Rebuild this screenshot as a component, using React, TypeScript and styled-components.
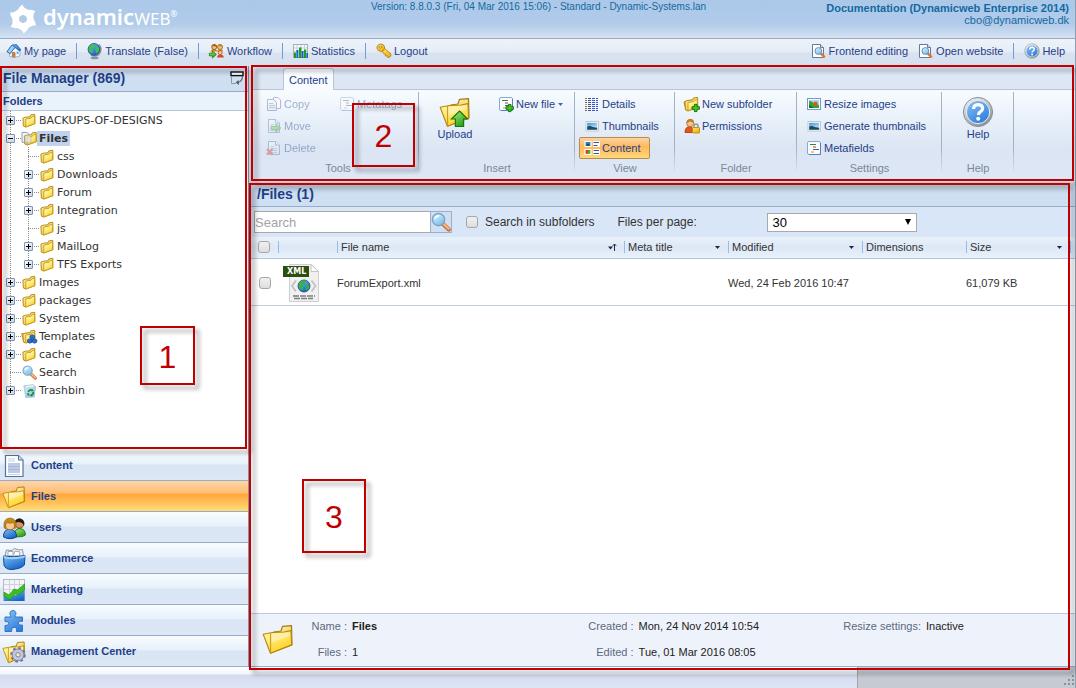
import React from "react";
import styled, { createGlobalStyle, css } from "styled-components";

const sans = `"Liberation Sans", Arial, sans-serif`;
const navy = "#1f3f87";
const line = "#98abc8";

const GlobalStyle = createGlobalStyle`
  *, *::before, *::after { box-sizing: border-box; }
  body { margin: 0; font-family: ${sans}; font-size: 11px; color: #333; background: #fff; }
  button, input, select { font: inherit; color: inherit; margin: 0; }
  button { cursor: pointer; }
  ul, dl, dd, h1, h2, h3 { margin: 0; padding: 0; }
  ul { list-style: none; }
  a { color: inherit; text-decoration: none; }
`;

/* ---------- Icons ---------- */

const Svg = styled.svg`
  display: block;
  flex: none;
  overflow: visible;
`;

const HiddenDefs = styled.svg`
  position: absolute;
`;

function Defs() {
  const stops = (id: string, a: string, b: string, c?: string) => (
    <linearGradient id={id} x1="0" y1="0" x2="0.6" y2="1">
      <stop offset="0" stopColor={a} />
      {c && <stop offset="0.5" stopColor={c} />}
      <stop offset="1" stopColor={b} />
    </linearGradient>
  );
  return (
    <HiddenDefs width="0" height="0" aria-hidden="true">
      <defs>
        {stops("gFolder", "#fffcd8", "#f7d02f", "#fdf08a")}
        {stops("gFolderBack", "#fff6c0", "#ecc23e")}
        {stops("gFront", "#fff9b8", "#ffd21e")}
        {stops("gLens", "#e6f8ff", "#7cc0ea")}
        {stops("gBlue", "#7fc0f7", "#1766c4")}
        {stops("gHelp", "#8cc4f6", "#2f7fdc")}
        {stops("gGreen", "#a6f07c", "#2f9c1c")}
        {stops("gDoc", "#ffffff", "#d5e0ef")}
        {stops("gSky", "#3c93d8", "#cfeaf8")}
        {stops("gSteel", "#fafafa", "#8f959c")}
        {stops("gGold", "#ffe96b", "#eeb010")}
        {stops("gBin", "#dff2fb", "#8fc4e4")}
      </defs>
    </HiddenDefs>
  );
}

type IconProps = { size?: number };
const make = (box: number, body: React.ReactNode) =>
  function Icon({ size = box }: IconProps) {
    return (
      <Svg width={size} height={size} viewBox={`0 0 ${box} ${box}`} aria-hidden="true">
        {body}
      </Svg>
    );
  };

const folderShape = (
  <g strokeWidth="1" strokeLinejoin="round">
    <path d="M1 5.4 L4 4.4 L8.6 4 L9.4 2 L13.6 1.4 L13.8 11.4 L4 15 L1.4 13.8 Z" fill="url(#gFolderBack)" stroke="#b8860b" />
    <path d="M4 6.4 L9.6 5.6 L10.6 4 L13.4 3.6 L13.4 11.4 L4 14.8 Z" fill="url(#gFolder)" stroke="#cf9f18" />
  </g>
);
const FolderIcon = make(16, folderShape);
const OpenFolderIcon = make(
  16,
  <>
    <path d="M0 1.5 H5.5 L8 4 V12 H0 Z" fill="#f4f6fa" stroke="#8a97ad" />
    <g transform="translate(1.5 0)">{folderShape}</g>
    <path d="M3 4.5 H8 L9.6 6 V12.4 H3 Z" fill="#dfe5ee" stroke="#9aa6b8" strokeWidth="0.8" opacity="0.7" />
  </>
);
const TemplatesIcon = make(
  16,
  <>
    <path d="M-0.5 5 L2 14 L11 12 L10 4 Z" fill="#fff3a8" stroke="#c08f18" />
    {folderShape}
    <g fill="#2472d2" stroke="#0c3f8e" strokeWidth="0.7">
      <path d="M11 6 l2.4 1.1 v2.5 l-2.4 1.2 l-2.5 -1.2 v-2.5z" />
      <path d="M8.4 10.4 l2.4 1.1 v2.5 l-2.4 1.2 l-2.5 -1.2 v-2.5z" />
      <path d="M13.4 10.4 l2.4 1.1 v2.5 l-2.4 1.2 l-2.5 -1.2 v-2.5z" />
    </g>
  </>
);
const SearchIcon = make(
  16,
  <>
    <path d="M9.4 9.4 L14.2 14" stroke="#c8703a" strokeWidth="3.4" strokeLinecap="round" />
    <path d="M9.8 9.4 L14 13.4" stroke="#f9b780" strokeWidth="1.8" strokeLinecap="round" />
    <circle cx="6" cy="6" r="4.9" fill="url(#gLens)" stroke="#7ba6c8" strokeWidth="1.2" />
    <path d="M3.2 5.5 Q4 3 6.6 3" stroke="#fff" strokeWidth="1.2" fill="none" />
  </>
);
const TrashIcon = make(
  16,
  <>
    <path d="M2 3 L12 2 L14.5 4 L13 15 L4 15.5 Z" fill="url(#gBin)" stroke="#9cc0d8" strokeWidth="0.8" />
    <path d="M2 3 L12 2 L14.5 4 L5 5.2 Z" fill="#f5fbff" stroke="#a4bccc" strokeWidth="0.6" />
    <g fill="none" stroke="#1c8c2c" strokeWidth="1.7">
      <path d="M6.5 9.5 Q8 6.5 10.6 7.6" />
      <path d="M12 9.3 Q12.6 12.2 9.8 13.2" />
      <path d="M7.8 13 Q5.9 12.4 6.2 10.8" />
    </g>
    <path d="M10 6 l2.8 1.8 l-2.6 1.6z M10.6 11.5 v3 l-2.4 -1.4z" fill="#1c8c2c" />
  </>
);
const HomeIcon = make(
  16,
  <>
    <path d="M3.6 8 V13.5 L8.6 14.6 L14 12.8 V7 L10 3 Z" fill="#f3f6fa" stroke="#8fa3bd" strokeWidth="0.8" />
    <path d="M1 8.6 L6 2 L10.6 1.6 L15 7 L13.4 8 L9 4.4 L4 10.6 Z" fill="url(#gBlue)" stroke="#2b6cae" strokeWidth="0.8" />
    <path d="M1 8.6 L6 2 L9 4.4 L4 10.6 Z" fill="#9dd0f4" stroke="#2b6cae" strokeWidth="0.8" />
    <path d="M6.4 14 V9.6 H9 V14.4" fill="#d7893e" stroke="#875021" strokeWidth="0.6" />
    <rect x="10.6" y="8.6" width="2" height="2.4" fill="#7ba6d6" />
  </>
);
const GlobeIcon = make(
  16,
  <>
    <ellipse cx="7.6" cy="15" rx="4" ry="1.2" fill="#8b929a" />
    <path d="M12 1.4 Q16 6.4 12 11.4 Q8.6 14.2 4 12.4" fill="none" stroke="#8b939d" strokeWidth="1.5" />
    <circle cx="7" cy="6.4" r="5.9" fill="url(#gBlue)" stroke="#0f3f94" strokeWidth="0.8" />
    <path d="M2 3.4 Q5 0.8 8 2 L7.6 4.5 L5 6 L6.2 8 L5 10.6 Q1.4 8.2 2 3.4 Z M8.6 4 Q12.5 3.4 12.3 7 Q11 10.4 9.2 10.2 L8.2 6.8 Z" fill="#3fc24a" />
  </>
);
const WorkflowIcon = make(
  16,
  <>
    <path d="M1.6 8.6 Q2.2 6 5.2 6 Q8 6 8.4 8.6 Z" fill="#e4791b" />
    <circle cx="5.2" cy="4" r="2.5" fill="#f1c38c" stroke="#8c4d12" strokeWidth="0.8" />
    <path d="M2.6 3.6 Q3 1 5.4 1.2 Q8 1.4 7.8 3.8 Q5 3 2.6 3.6Z" fill="#a8660f" />
    <path d="M7.8 8.6 Q8.4 6 11 6 Q13.8 6 14.2 8.6 Z" fill="#d09a14" />
    <circle cx="11" cy="4" r="2.5" fill="#f1c38c" stroke="#9b5c12" strokeWidth="0.8" />
    <path d="M8.4 3.6 Q9 1 11.2 1.2 Q13.8 1.4 13.6 3.8 Q11 3 8.4 3.6Z" fill="#c98a14" />
    <circle cx="11.2" cy="9.6" r="2" fill="#f7c3a0" stroke="#8e2b17" strokeWidth="0.6" />
    <path d="M8 14.4 Q8.6 11.4 11.4 11.6 Q14.4 11.6 14.8 14.4 Z" fill="#d8471d" />
    <path d="M0.4 10.2 H3.4 V8 L7.4 11.4 L3.4 15 V12.8 H0.4 Z" fill="url(#gGreen)" stroke="#1c7a12" strokeWidth="0.8" />
  </>
);
const StatsIcon = make(
  16,
  <>
    <rect x="0.5" y="1.5" width="14" height="13" fill="#f7f9fc" stroke="#a4adbd" />
    <path d="M1 5 H14 M1 8.5 H14 M4 2 V14 M8 2 V14 M11.5 2 V14" stroke="#c9cfdb" />
    <path d="M1 9.5 h2 v5.5 h-2z M6 4.5 h2.4 v10.5 h-2.4z M11 6.5 h2.2 v8.5 h-2.2z" fill="#18a01d" />
    <path d="M3.4 7 h2 v8 h-2z M8.6 8 h2 v7 h-2z M13.4 10 h1.6 v5 h-1.6z" fill="#1d5fc9" />
  </>
);
const KeyIcon = make(
  16,
  <g stroke="#b07a08" strokeWidth="0.8" strokeLinejoin="round">
    <path d="M6 7.4 L8.4 5.2 L15 11 L14.6 13.4 L12 14.8 L11.2 12.8 L9.4 13 L9.2 11 L7.6 10.6 Z" fill="url(#gGold)" />
    <path d="M0.8 5 Q0.6 2 4 1 Q8 0.6 8.6 4 Q9 7.6 5.4 8.6 Q1.6 8.4 0.8 5 Z M2.6 4.4 Q4 6.2 6.2 4 Q4.6 2 2.6 4.4Z" fill="url(#gGold)" fillRule="evenodd" />
  </g>
);
const PageFindIcon = make(
  16,
  <>
    <path d="M1.5 1.5 H9.5 L12.5 4.5 V14.5 H1.5 Z" fill="#fff" stroke="#5f7ba5" />
    <path d="M9.5 1.5 V4.5 H12.5" fill="#dbe5f3" stroke="#5f7ba5" />
    <path d="M9.8 10.4 L13 13.6" stroke="#e2762e" strokeWidth="2.6" strokeLinecap="round" />
    <circle cx="7.4" cy="8" r="3.4" fill="url(#gLens)" stroke="#6d8fb0" />
  </>
);
const HelpIcon = make(
  32,
  <>
    <circle cx="16" cy="16" r="14.6" fill="url(#gSteel)" stroke="#8a9097" strokeWidth="1" />
    <circle cx="16" cy="16" r="11.6" fill="url(#gHelp)" stroke="#eceff2" strokeWidth="1" />
    <path d="M11.6 13 Q11.6 8.6 16.2 8.6 Q20.6 8.8 20.6 12.6 Q20.4 14.8 18 16.2 Q16.6 17 16.4 19" fill="none" stroke="#fff" strokeWidth="3.2" />
    <circle cx="16.2" cy="22.8" r="2" fill="#fff" />
  </>
);

const metaLines = (
  <>
    <rect x="1.5" y="1.5" width="13" height="13" rx="1.5" fill="#fbfdff" stroke="#86a9da" />
    <path d="M14.5 3 V14.5 H3" fill="none" stroke="#5580be" />
    <path d="M4 4.5 H10" stroke="#2c8c2c" />
    <path d="M7 7 H10" stroke="#d22c1c" />
    <path d="M7 9.5 H13" stroke="#2c63c4" />
    <path d="M5 12 H8" stroke="#d2921c" />
  </>
);
const MetaIcon = make(16, metaLines);
const plusBadge = (
  <path
    d="M10.4 8.4 h2.6 v2.3 h2.4 v2.6 h-2.4 v2.3 h-2.6 v-2.3 h-2.4 v-2.6 h2.4z"
    fill="#41c81e"
    stroke="#0e6a08"
    strokeWidth="0.9"
  />
);
const NewFileIcon = make(16, <>{metaLines}{plusBadge}</>);
const docShape = (
  <>
    <path d="M2.5 1.5 H9.5 L13.5 5 V14.5 H2.5 Z" fill="url(#gDoc)" stroke="#5f7ba5" />
    <path d="M9.5 1.5 V5 H13.5" fill="#fff" stroke="#5f7ba5" />
    <path d="M4.5 6.5 H8 M4.5 8.5 H11 M4.5 10.5 H11 M4.5 12.5 H11" stroke="#9aabca" />
  </>
);
const CopyIcon = make(
  16,
  <>
    <path d="M7.5 1.5 H12 L14.5 4 V12.5 H7.5 Z" fill="#fff" stroke="#7a4a9e" />
    <path d="M1.5 3.5 H7.5 L10.5 6.5 V14.5 H1.5 Z" fill="url(#gDoc)" stroke="#4d669a" />
    <path d="M3 7.5 H7 M3 9.5 H9 M3 11.5 H9" stroke="#6d82ae" />
  </>
);
const MoveIcon = make(
  16,
  <>
    {docShape}
    <path d="M5 8.4 H10 V6 L14.8 10 L10 14 V11.6 H5 Z" fill="url(#gGreen)" stroke="#1c7a12" strokeWidth="0.8" />
  </>
);
const DeleteIcon = make(
  16,
  <>
    {docShape}
    <path d="M1 9 L6.5 14.5 M6.5 9 L1 14.5" stroke="#d2301c" strokeWidth="2.2" />
  </>
);
const DetailsIcon = make(
  16,
  <>
    {[2.5, 4.5, 6.5, 8.5, 10.5, 12.5, 14.5].map((y, i) => (
      <g key={y}>
        <path d={`M1 ${y} h2`} stroke={["#3a9c3a", "#d2501c", "#3a62c4", "#d2a01c"][i % 4]} />
        <path d={`M4 ${y} h3`} stroke="#47518f" />
        <path d={`M8 ${y} h3 M12 ${y} h2`} stroke="#3557c8" />
      </g>
    ))}
  </>
);
const ThumbIcon = make(
  16,
  <>
    <rect x="2" y="3.5" width="12.5" height="9.5" fill="#fff" stroke="#c0c8d2" />
    <rect x="3.2" y="4.8" width="10" height="7" fill="url(#gSky)" />
    <path d="M3.2 8.6 Q6 7 8.6 9 L13.2 9.8 V11.8 H3.2 Z" fill="#194e5e" />
  </>
);
const ContentViewIcon = make(
  16,
  <>
    <path d="M0.5 1 h7 v6 h-7z M0.5 9 h7 v6 h-7z M9 1 h7 v6 h-7z M9 9 h7 v6 h-7z" fill="#fff" />
    <rect x="1.6" y="2" width="4.8" height="3.8" fill="#2a86b8" />
    <path d="M1.6 5.8 L4 3.6 L6.4 5.8 Z" fill="#133c52" />
    <rect x="1.6" y="10" width="2.4" height="3.8" fill="#d2401c" />
    <rect x="4" y="10" width="2.4" height="3.8" fill="#4fae2c" />
    <path d="M9.6 2.5 H15 M9.6 5.5 H13.5 M9.6 10.5 H15 M9.6 13.5 H15" stroke="#3d50b4" strokeWidth="1.2" />
  </>
);
const NewSubIcon = make(
  16,
  <>
    <path d="M0 6 L2 14 L9 12 L8 4 Z" fill="#fff3a8" stroke="#b8860b" />
    {folderShape}
    {plusBadge}
  </>
);
const PermissionsIcon = make(
  16,
  <>
    <path d="M1 14.5 Q1 8.8 5.8 8.6 Q9.4 8.8 9.8 14.5 Z" fill="#e4571b" stroke="#9b3407" strokeWidth="0.8" />
    <circle cx="6.2" cy="5" r="3.6" fill="#f6c793" stroke="#a5681f" strokeWidth="0.8" />
    <path d="M2.6 5 Q3 1 6.6 1 Q10 1.2 9.8 4.8 Q7 4.4 6 3.2 Q4.6 4.8 2.6 5Z" fill="#c77c22" />
    <path d="M10 10 V8 Q10.2 6 12 6 Q14 6 14 8 V10" fill="none" stroke="#8d9299" strokeWidth="1.4" />
    <rect x="8.5" y="9.5" width="7" height="5.5" rx="0.6" fill="url(#gGold)" stroke="#c08a0a" strokeWidth="0.9" />
  </>
);
const ResizeIcon = make(
  16,
  <>
    <rect x="1.5" y="2.5" width="13" height="11" fill="#fff" stroke="#6d9ad2" />
    <rect x="3" y="4" width="10" height="8" fill="#a8d6f4" />
    <path d="M3 5 Q6 4.5 8 7.6 Q10.6 8 13 9 V12 H3 Z" fill="#37a32c" />
    <circle cx="9.6" cy="7.6" r="2.1" fill="#e8541c" />
    <path d="M3 9 L8 12 H3 Z" fill="#1d6a1c" />
  </>
);
const bigFolder = (
  <g strokeLinejoin="round">
    <path d="M12 9 L19 8 L20.5 3.4 L29.5 2.6 L30 22 L9 30 Z" fill="url(#gFolderBack)" stroke="#a87810" strokeWidth="1.2" />
    <path d="M1.2 11.2 L9 9.8 L12 9.4 L22 9 L29 7.6 L29.6 21.8 L8.4 30.2 Z" fill="url(#gFront)" stroke="#b8860b" strokeWidth="1.1" />
    <path d="M8.6 10 V29.6" fill="none" stroke="#c99a22" strokeWidth="1.1" />
    <path d="M9.4 11 L28 9.4 V13 L9.4 20 Z" fill="#fff" opacity="0.35" />
  </g>
);
const BigFolderIcon = make(32, bigFolder);
const UploadIcon = make(
  32,
  <>
    {bigFolder}
    <path d="M20.5 15 L28.5 23 H24.6 V30.5 H16.4 V23 H12.5 Z" fill="url(#gGreen)" stroke="#157a0c" strokeWidth="1.2" />
  </>
);
const NavDocIcon = make(
  24,
  <>
    <path d="M3.5 1.5 H16.5 L21 6 V22.5 H3.5 Z" fill="#fff" stroke="#55719f" strokeWidth="1.2" />
    <path d="M16.5 1.5 V6 H21" fill="#cad9ee" stroke="#55719f" />
    <path d="M6 5 H13 M6 7 H13" stroke="#c3cfe4" />
    <rect x="6" y="9" width="12" height="10" fill="#bccae6" />
    <path d="M6 12.5 H18 M6 15.5 H18" stroke="#a9b8da" />
    <path d="M6 20.5 H18" stroke="#c3cfe4" />
  </>
);
const NavUsersIcon = make(
  24,
  <>
    <path d="M12 20.5 Q12 12.6 17.6 12.6 Q23.4 12.8 23.4 19 Q20 21.6 12 20.5Z" fill="url(#gGreen)" stroke="#237a18" />
    <circle cx="17.4" cy="7.6" r="4.6" fill="#d99658" stroke="#3c2410" strokeWidth="0.7" />
    <path d="M12.6 7 Q13 2.4 18 2.4 Q22.8 3 22 9.4 Q20.6 6.4 17 6 Q15 6 12.6 7Z" fill="#1d1a18" />
    <path d="M1.5 21 Q1.2 13.6 7.8 13.2 Q14.4 13.6 14.6 21 Q8 24.4 1.5 21Z" fill="url(#gBlue)" stroke="#0e448e" />
    <circle cx="8" cy="8.6" r="5.2" fill="#fac58e" stroke="#9a6012" strokeWidth="0.7" />
    <path d="M2 11 Q1 2.6 8 2 Q15 2.4 14 11 Q13.4 12.8 12.4 13 Q13 8 11.4 6.4 Q8 8 4.4 6.4 Q3.2 9 4 13 Q2.6 12.8 2 11Z" fill="#c78a16" stroke="#8f5d08" strokeWidth="0.6" />
  </>
);
const NavShopIcon = make(
  24,
  <>
    <path d="M3 9 L4.4 3 L10 3.5 L12.5 1.5 L17 3 L20.5 2.5 L21.5 9 Z" fill="#f1f2f4" stroke="#8d949d" />
    <path d="M6 8 V4.5 H11 V8 M11.5 8 L13 4 L18 5 L17.5 8" fill="#fff" stroke="#a3a9b2" />
    <path d="M1.5 9 Q12 11 23 8.5 L22.4 18 Q19 22 9 22.6 Q3 22 2 18 Z" fill="url(#gBlue)" stroke="#0d4d9e" />
    <path d="M1.5 9 Q12 11.6 23 8.5 L22.8 10.6 Q12 13.8 1.8 11.2 Z" fill="#9fd3fb" />
  </>
);
const NavChartIcon = make(
  24,
  <>
    <rect x="1.5" y="1.5" width="21" height="21" fill="#f3f4f8" stroke="#b4b8c6" />
    <path d="M2 6.5 H22 M2 11.5 H22 M7.5 2 V22 M12.5 2 V22 M17.5 2 V22" stroke="#cfd2de" />
    <path d="M2 23 V17 L8 19 L14 17 L18 13.5 L22.5 12 V23 Z" fill="url(#gBlue)" />
    <path d="M2 14 L7 17 L12 11 L15.5 12 L22.5 6 V12 L17 16.5 L13.5 16 L8 21.5 L2 18.5 Z" fill="#39bf1e" stroke="#1f8f10" strokeWidth="0.6" />
  </>
);
const NavPuzzleIcon = make(
  24,
  <path
    d="M3 8 H8.8 Q9.2 6.8 8 5.6 Q7.2 2 10.8 1.4 Q14.6 1.8 13.8 5.4 Q12.6 6.8 13 8 H20.5 V12.4 Q16.6 11.4 16.2 14 Q16.4 16.8 20.5 16 V22.5 H14.4 Q15.4 18.6 12 18.2 Q8.8 18.6 9.6 22.5 H3 V16.6 Q6.8 16.8 6.8 14.2 Q6.4 11.8 3 12.6 Z"
    fill="url(#gHelp)"
    stroke="#2a6cb8"
    strokeWidth="0.9"
  />
);
const NavFolderIcon = make(24, <g transform="scale(0.75)">{bigFolder}</g>);
const NavManageIcon = make(
  24,
  <>
    <g transform="scale(0.75)">{bigFolder}</g>
    <circle cx="16" cy="14.8" r="6.6" fill="none" stroke="#6d7296" strokeWidth="2.4" strokeDasharray="2.6 2.58" />
    <circle cx="16" cy="14.8" r="5.9" fill="#c3c6e0" stroke="#7c81a8" />
    <circle cx="16" cy="14.8" r="2.2" fill="#f7efc0" stroke="#7c81a8" />
  </>
);
const XmlLabel = styled.text`
  font: bold 8px "DejaVu Sans", sans-serif;
  fill: #fff;
`;
const XmlFileIcon = make(
  40,
  <>
    <path d="M7.5 1.5 H29 L36.5 8.5 V38.5 H7.5 Z" fill="#f0f0f0" stroke="#cfcfcf" />
    <path d="M29 1.5 V8.5 H36.5 Z" fill="#fff" stroke="#c4c4c4" />
    <rect x="1" y="3" width="26" height="11" fill="#2c4f10" />
    <XmlLabel x="5" y="11">XML</XmlLabel>
    <path d="M14 17.5 L10 23 L14 28.5 M29.5 17.5 L33.5 23 L29.5 28.5" fill="none" stroke="#c2c2c2" strokeWidth="1.8" />
    <circle cx="22" cy="23" r="6" fill="url(#gBlue)" stroke="#123d80" strokeWidth="0.8" />
    <path d="M18.6 19 Q21.6 16.4 24.6 17.8 L22.6 20.6 L20 21.4 L21.4 24 L20 27.6 Q15.8 25 17 21.2 Z M24 21.4 Q27.4 20.8 27.4 24 Q26 27.4 24 27.4 Z" fill="#35b533" />
    <path d="M11 33 H33 M12 35.5 H31" stroke="#7b7b7b" strokeWidth="1.4" strokeDasharray="6 1" />
  </>
);
const DockIcon = make(
  14,
  <>
    <rect x="1" y="1" width="12" height="3.6" fill="#fff" stroke="#111" strokeWidth="1.4" />
    <path d="M1.5 5 V12.5 H6" fill="none" stroke="#8f98a5" />
    <path d="M12.4 5 Q12.6 10.6 7.4 11.4" fill="none" stroke="#666d77" strokeWidth="1.2" />
    <path d="M8.6 9 L5.6 11.6 L9 14 Z" fill="#555c66" />
  </>
);
const CaretIcon = make(7, <path d="M1 2 H6 L3.5 5 Z" fill="#1d2740" />);
const BlueCaretIcon = make(7, <path d="M1 2 H6 L3.5 5 Z" fill="#3f6aa8" />);
const SortIcon = make(
  9,
  <>
    <path d="M0 3.4 H5 L2.5 6.4 Z" fill="#1d2740" />
    <path d="M6.5 1 V8 M4.8 2.8 L6.5 1 L8.2 2.8" fill="none" stroke="#1d2740" />
  </>
);
const StarLogo = make(
  30,
  <g fill="#fff">
    {[0, 60, 120, 180, 240, 300].map((a) => (
      <path key={a} transform={`rotate(${a} 15 15)`} d="M10.4 10.8 Q8 4.8 14.4 0.4 Q15.6 4.6 21.8 6.2 Q21.4 10.4 17.8 11.8 Q15 10 12 12.2 Z" />
    ))}
  </g>
);

/* ---------- Header ---------- */

const Page = styled.div`
  display: flex;
  flex-direction: column;
  min-height: 100vh;
  border-right: 1px solid #8f9cb5;
`;

const Header = styled.header`
  display: grid;
  grid-template-columns: 1fr auto 1fr;
  height: 39px;
  padding: 0 6px 0 8px;
  color: #14699f;
  background: linear-gradient(#abc8e9 0, #b1cbea 24px, #d5e2f2 38px);
  border-bottom: 1px solid #9aa9c2;
`;

const Logo = styled.a`
  display: flex;
  align-items: center;
  gap: 5px;
  color: #fff;
  font: 600 22px/30px "Noto Sans", sans-serif;
`;

const LogoText = styled.span`
  padding-bottom: 4px;
`;

const LogoSuffix = styled.span`
  font-size: 17px;
  font-weight: 400;
`;

const LogoMark = styled.sup`
  font-size: 8px;
  font-weight: 400;
  line-height: 1;
`;

const Version = styled.p`
  margin: 0;
  font-size: 10px;
  line-height: 14px;
`;

const Account = styled.div`
  text-align: right;
  line-height: 12px;
  padding-top: 2px;
`;

const Bar = styled.nav`
  display: flex;
  align-items: center;
  height: 27px;
  padding: 0 0 3px 6px;
  color: ${navy};
  background: linear-gradient(#eef3f9 0, #e6ecf6 13px, #d8e2f0 14px, #d6e1f0 100%);
`;

const BarLink = styled.a<{ $divided?: boolean }>`
  display: flex;
  align-items: center;
  gap: 2px;
  height: 16px;
  padding-right: 10px;
  ${(p) =>
    p.$divided &&
    css`
      border-left: 1px solid #6f9fd8;
      padding-left: 10px;
    `}
`;

const Spacer = styled.span`
  flex: 1;
`;

/* ---------- Numbered call-outs ---------- */

const Marked = css`
  content: "";
  position: absolute;
  inset: 0;
  border: 2px solid #c00000;
  filter: drop-shadow(4px 4px 2px rgba(0, 0, 0, 0.4));
`;

const Outline = styled.div<{ $inset: string }>`
  position: absolute;
  inset: ${(p) => p.$inset};
  z-index: 2;
  pointer-events: none;
  &::before {
    ${Marked}
  }
`;

const Callout = styled.div<{ $x: number; $y: number; $w: number; $h: number }>`
  position: absolute;
  left: ${(p) => p.$x}px;
  top: ${(p) => p.$y}px;
  width: ${(p) => p.$w}px;
  height: ${(p) => p.$h}px;
  z-index: 3;
  display: flex;
  align-items: center;
  justify-content: center;
  padding-top: 3px;
  font-size: 32px;
  color: #c00000;
  pointer-events: none;
  &::before {
    ${Marked}
  }
`;

/* ---------- Sidebar ---------- */

const Workspace = styled.div`
  flex: 1;
  display: grid;
  grid-template-columns: 249px minmax(0, 1fr);
`;

const Sidebar = styled.aside`
  display: flex;
  flex-direction: column;
  border-right: 1px solid #8393b0;
`;

const Explorer = styled.section`
  position: relative;
  flex: 1;
`;

const PaneTitle = styled.div<{ $height: number; $left: number }>`
  display: flex;
  align-items: center;
  justify-content: space-between;
  height: ${(p) => p.$height}px;
  padding: 0 4px 2px ${(p) => p.$left}px;
  background: #cfdff2;
  border-bottom: 1px solid ${line};
`;

const PaneHeading = styled.h1`
  font-size: 14px;
  line-height: 18px;
  color: ${navy};
`;

const IconButton = styled.button`
  padding: 0;
  border: 0;
  background: none;
`;

const SubTitle = styled.h2`
  height: 19px;
  padding-left: 3px;
  font-size: 11px;
  line-height: 19px;
  color: ${navy};
  background: #eaf3fc;
  border-bottom: 1px solid #b4c8dc;
`;

const dots = (dir: string) =>
  `repeating-linear-gradient(${dir}, #8a8a8a 0, #8a8a8a 1px, transparent 1px, transparent 2px)`;

const Tree = styled.ul`
  font-family: "DejaVu Sans", Verdana, sans-serif;
  color: #333;
`;

const Branch = styled.ul`
  padding-left: 18px;
`;

const Node = styled.li`
  background: ${dots("to bottom")} 10px 0 / 1px 100% no-repeat;
  &:last-child {
    background-size: 1px 9px;
  }
`;

const NodeRow = styled.div`
  display: flex;
  align-items: center;
  height: 18px;
`;

const Gutter = styled.span`
  display: flex;
  align-items: center;
  width: 22px;
  height: 18px;
  padding-left: 6px;
  background: ${dots("to right")} 10px 9px / 11px 1px no-repeat;
`;

const Expander = styled.button`
  width: 9px;
  height: 9px;
  padding: 0;
  border: 1px solid #7896b8;
  border-radius: 1px;
  background: linear-gradient(135deg, #fff, #ccd3de);
`;

const NodeLink = styled.a<{ $selected?: boolean }>`
  padding: 0 2px;
  line-height: 15px;
  ${(p) =>
    p.$selected &&
    css`
      font-weight: bold;
      background: #c0d2ee;
    `}
`;

const AreaNav = styled.nav`
  color: ${navy};
  font-weight: bold;
`;

const AreaLink = styled.a<{ $active?: boolean }>`
  display: flex;
  align-items: center;
  gap: 5px;
  height: 31px;
  padding: 2px 0 0 2px;
  border-bottom: 1px solid ${line};
  background: ${(p) =>
    p.$active
      ? "linear-gradient(#ffd5a6 0, #ffbe74 12px, #ffa63a 13px, #ffdd78 100%)"
      : "linear-gradient(#f8fcff 0, #e7f1fa 14px, #d9e5f5 15px, #dde7f5 100%)"};
`;

const AreaText = styled.span`
  padding-bottom: 2px;
`;

/* ---------- Ribbon ---------- */

const MainColumn = styled.main`
  display: flex;
  flex-direction: column;
  padding-left: 2px;
  background: #dfe8f4;
`;

const Ribbon = styled.section`
  position: relative;
`;

const Tabs = styled.div`
  display: flex;
  align-items: flex-end;
  height: 24px;
  padding-left: 32px;
  background: #dde7f4;
  border-bottom: 1px solid #b6c6d8;
`;

const Tab = styled.button`
  height: 22px;
  margin-bottom: -1px;
  padding: 0 5px;
  color: ${navy};
  background: #f8fbff;
  border: 1px solid #b6c6d8;
  border-bottom: 0;
  border-radius: 3px 3px 0 0;
`;

const RibbonBody = styled.div`
  display: flex;
  height: 93px;
  padding: 2px 0 0 6px;
  background: linear-gradient(#f8fcff 0, #e8f0f9 30px, #dbe5f3 60px, #dde7f5 100%);
`;

const Group = styled.section<{ $width: number }>`
  width: ${(p) => p.$width}px;
  height: 80px;
  padding: 1px 0 0 4px;
  border-right: 1px solid;
  border-image: linear-gradient(#a4b2c6, #a4b2c6 70%, #dbe5f3) 1;
`;

const GroupItems = styled.div<{ $left?: number }>`
  display: flex;
  align-items: flex-start;
  height: 67px;
  padding-left: ${(p) => p.$left ?? 0}px;
`;

const Stack = styled.div<{ $width?: number }>`
  width: ${(p) => (p.$width ? `${p.$width}px` : "auto")};
`;

const GroupName = styled.h3`
  padding-right: 3px;
  font-size: 11px;
  font-weight: normal;
  line-height: 17px;
  text-align: center;
  color: #7e8795;
`;

const RibbonButton = styled.button<{ $active?: boolean }>`
  display: flex;
  align-items: center;
  gap: 2px;
  height: 22px;
  padding: 0 8px 0 4px;
  border: 1px solid transparent;
  background: none;
  color: ${navy};
  white-space: nowrap;
  &:disabled {
    opacity: 0.4;
    cursor: default;
  }
  ${(p) =>
    p.$active &&
    css`
      border-color: #b48c4c;
      border-radius: 2px;
      background: linear-gradient(#fbd3a0, #ffb85c 45%, #ffd978);
    `}
`;

const LargeButton = styled.button`
  display: flex;
  flex-direction: column;
  align-items: center;
  width: 42px;
  margin-top: 3px;
  padding: 0;
  border: 0;
  background: none;
  color: ${navy};
`;

/* ---------- File list ---------- */

const FilesPane = styled.section`
  position: relative;
  flex: 1;
  display: flex;
  flex-direction: column;
  background: #fff;
`;

const SearchForm = styled.form`
  display: flex;
  align-items: center;
  height: 30px;
  padding-left: 3px;
  font-size: 12px;
  background: #d9e6f7;
`;

const SearchField = styled.input`
  width: 177px;
  height: 22px;
  padding: 0;
  font-size: 13px;
  background: #fff;
  border: 1px solid #a9a9a9;
  &::placeholder {
    color: #a3a3a3;
    opacity: 1;
  }
`;

const SearchButton = styled.button`
  display: flex;
  align-items: center;
  justify-content: center;
  width: 22px;
  height: 22px;
  margin-left: -1px;
  padding: 0;
  background: #cfe0f5;
  border: 1px solid #a0aec4;
`;

const CheckLabel = styled.label`
  display: flex;
  align-items: center;
  gap: 7px;
  margin: 0 23px 0 14px;
`;

const Check = styled.input.attrs({ type: "checkbox" })`
  appearance: none;
  display: block;
  flex: none;
  width: 12px;
  height: 12px;
  background: linear-gradient(#f0f0f0, #dedede);
  border: 1px solid #a6a6a6;
  border-radius: 3px;
`;

const PageSizeLabel = styled.label`
  width: 150px;
`;

const SelectBox = styled.span`
  position: relative;
  display: block;
  width: 150px;
`;

const Select = styled.select`
  appearance: none;
  display: block;
  width: 100%;
  height: 19px;
  padding: 0 4px;
  font-size: 13px;
  line-height: 17px;
  color: #000;
  background: #fff;
  border: 1px solid #a9a9a9;
`;

const SelectArrow = styled.svg`
  position: absolute;
  right: 5px;
  top: 6px;
  pointer-events: none;
`;

const Table = styled.table`
  width: 100%;
  table-layout: fixed;
  border-collapse: separate;
  border-spacing: 0;
  background: #fff;
`;

const HeadCell = styled.th`
  height: 22px;
  padding: 0 0 1px;
  font-weight: normal;
  text-align: left;
  background: linear-gradient(#eaf1fa 0, #dde8f5 10px, #e8f1fb 100%);
  border-bottom: 1px solid #b4c8dc;
`;

const HeadInner = styled.div<{ $first?: boolean }>`
  display: flex;
  align-items: center;
  justify-content: space-between;
  height: 12px;
  padding: 0 7px 0 ${(p) => (p.$first ? 7 : 3)}px;
  border-left: ${(p) => (p.$first ? 0 : 1)}px solid #8fbdf3;
`;

const Cell = styled.td<{ $left?: number }>`
  height: 47px;
  padding: 2px 0 0 ${(p) => p.$left ?? 0}px;
  border-bottom: 1px solid #c3cfdc;
`;

const Info = styled.footer`
  display: flex;
  align-items: center;
  margin-top: auto;
  height: 54px;
  padding: 0 0 2px 11px;
  background: #eef3fb;
  border-top: 1px solid #b9c9e2;
  border-bottom: 1px solid ${line};
`;

const Facts = styled.dl`
  flex: 1;
  display: grid;
  grid-template-columns: 40px 229fr 46px 196fr 80px 148fr;
  column-gap: 5px;
  line-height: 26px;
  margin-left: 13px;
`;

const FactName = styled.dt<{ $column: number }>`
  grid-column: ${(p) => p.$column};
  text-align: right;
  white-space: nowrap;
  color: #5c6880;
`;

const FactValue = styled.dd<{ $bold?: boolean }>`
  color: #222;
  font-weight: ${(p) => (p.$bold ? "bold" : "normal")};
`;

const StatusBar = styled.div`
  display: flex;
  justify-content: flex-end;
  height: 21px;
  background: linear-gradient(#fff 0, #f2f5fb 7px, #d3dbee 8px, #dee5f5 100%);
`;

const StatusEnd = styled.div`
  display: flex;
  align-items: flex-end;
  justify-content: flex-end;
  width: 218px;
  padding: 0 1px 3px 0;
  background: #c6cbd3;
  border-left: 1px solid #a0a5ad;
`;

/* ---------- Data ---------- */

type TreeItem = {
  name: string;
  icon?: (p: IconProps) => React.JSX.Element;
  leaf?: boolean;
  selected?: boolean;
  children?: TreeItem[];
};

const tree: TreeItem[] = [
  { name: "BACKUPS-OF-DESIGNS" },
  {
    name: "Files",
    icon: OpenFolderIcon,
    selected: true,
    children: [
      { name: "css", leaf: true },
      { name: "Downloads" },
      { name: "Forum" },
      { name: "Integration" },
      { name: "js", leaf: true },
      { name: "MailLog" },
      { name: "TFS Exports" },
    ],
  },
  { name: "Images" },
  { name: "packages" },
  { name: "System" },
  { name: "Templates", icon: TemplatesIcon },
  { name: "cache" },
  { name: "Search", icon: SearchIcon, leaf: true },
  { name: "Trashbin", icon: TrashIcon },
];

const areas = [
  { name: "Content", icon: NavDocIcon },
  { name: "Files", icon: NavFolderIcon, active: true },
  { name: "Users", icon: NavUsersIcon },
  { name: "Ecommerce", icon: NavShopIcon },
  { name: "Marketing", icon: NavChartIcon },
  { name: "Modules", icon: NavPuzzleIcon },
  { name: "Management Center", icon: NavManageIcon },
];

function TreeNode({ item }: { item: TreeItem }) {
  const Icon = item.icon ?? FolderIcon;
  const open = Boolean(item.children);
  return (
    <Node>
      <NodeRow>
        <Gutter>
          {!item.leaf && (
            <Expander aria-label={`${open ? "Collapse" : "Expand"} ${item.name}`}>
              <Svg width="7" height="7" viewBox="0 0 7 7" aria-hidden="true">
                <path d={open ? "M1 3.5 H6" : "M1 3.5 H6 M3.5 1 V6"} stroke="#000" />
              </Svg>
            </Expander>
          )}
        </Gutter>
        <Icon size={15} />
        <NodeLink href="#" $selected={item.selected}>{item.name}</NodeLink>
      </NodeRow>
      {item.children && (
        <Branch>
          {item.children.map((c) => (
            <TreeNode key={c.name} item={c} />
          ))}
        </Branch>
      )}
    </Node>
  );
}

function Head({ children, icon }: { children?: React.ReactNode; icon?: React.ReactNode }) {
  return (
    <HeadCell scope="col">
      <HeadInner>
        <span>{children}</span>
        {icon}
      </HeadInner>
    </HeadCell>
  );
}

export default function App() {
  return (
    <Page>
      <GlobalStyle />
      <Defs />
      <Header>
        <Logo href="#">
          <StarLogo />
          <LogoText>
            dynamic<LogoSuffix>WEB</LogoSuffix>
            <LogoMark>®</LogoMark>
          </LogoText>
        </Logo>
        <Version>Version: 8.8.0.3 (Fri, 04 Mar 2016 15:06) - Standard - Dynamic-Systems.lan</Version>
        <Account>
          <strong>Documentation (Dynamicweb Enterprise 2014)</strong>
          <br />
          <a href="#">cbo@dynamicweb.dk</a>
        </Account>
      </Header>
      <Bar>
        <BarLink href="#"><HomeIcon />My page</BarLink>
        <BarLink href="#" $divided><GlobeIcon />Translate (False)</BarLink>
        <BarLink href="#" $divided><WorkflowIcon />Workflow</BarLink>
        <BarLink href="#" $divided><StatsIcon />Statistics</BarLink>
        <BarLink href="#" $divided><KeyIcon />Logout</BarLink>
        <Spacer />
        <BarLink href="#"><PageFindIcon />Frontend editing</BarLink>
        <BarLink href="#"><PageFindIcon />Open website</BarLink>
        <BarLink href="#" $divided><HelpIcon size={16} />Help</BarLink>
      </Bar>

      <Workspace>
        <Sidebar>
          <Explorer>
            <PaneTitle $height={26} $left={3}>
              <PaneHeading>File Manager (869)</PaneHeading>
              <IconButton aria-label="Undock pane"><DockIcon /></IconButton>
            </PaneTitle>
            <SubTitle>Folders</SubTitle>
            <Tree>
              {tree.map((item) => (
                <TreeNode key={item.name} item={item} />
              ))}
            </Tree>
            <Outline $inset="0 1px 1px 0" />
            <Callout $x={140} $y={260} $w={55} $h={59}>1</Callout>
          </Explorer>
          <AreaNav>
            {areas.map(({ name, icon: Icon, active }) => (
              <AreaLink key={name} href="#" $active={active}>
                <Icon />
                <AreaText>{name}</AreaText>
              </AreaLink>
            ))}
          </AreaNav>
        </Sidebar>

        <MainColumn>
          <Ribbon>
            <Tabs>
              <Tab>Content</Tab>
            </Tabs>
            <RibbonBody>
              <Group $width={162}>
                <GroupItems>
                  <Stack $width={73}>
                    <RibbonButton disabled><CopyIcon />Copy</RibbonButton>
                    <RibbonButton disabled><MoveIcon />Move</RibbonButton>
                    <RibbonButton disabled><DeleteIcon />Delete</RibbonButton>
                  </Stack>
                  <RibbonButton disabled><MetaIcon />Metatags</RibbonButton>
                </GroupItems>
                <GroupName>Tools</GroupName>
              </Group>
              <Group $width={156}>
                <GroupItems $left={11}>
                  <Stack $width={59}>
                    <LargeButton><UploadIcon />Upload</LargeButton>
                  </Stack>
                  <RibbonButton><NewFileIcon />New file <BlueCaretIcon /></RibbonButton>
                </GroupItems>
                <GroupName>Insert</GroupName>
              </Group>
              <Group $width={100}>
                <GroupItems>
                  <Stack>
                    <RibbonButton><DetailsIcon />Details</RibbonButton>
                    <RibbonButton><ThumbIcon />Thumbnails</RibbonButton>
                    <RibbonButton $active><ContentViewIcon />Content</RibbonButton>
                  </Stack>
                </GroupItems>
                <GroupName>View</GroupName>
              </Group>
              <Group $width={122}>
                <GroupItems>
                  <Stack>
                    <RibbonButton><NewSubIcon />New subfolder</RibbonButton>
                    <RibbonButton><PermissionsIcon />Permissions</RibbonButton>
                  </Stack>
                </GroupItems>
                <GroupName>Folder</GroupName>
              </Group>
              <Group $width={145}>
                <GroupItems>
                  <Stack>
                    <RibbonButton><ResizeIcon />Resize images</RibbonButton>
                    <RibbonButton><ThumbIcon />Generate thumbnails</RibbonButton>
                    <RibbonButton><MetaIcon />Metafields</RibbonButton>
                  </Stack>
                </GroupItems>
                <GroupName>Settings</GroupName>
              </Group>
              <Group $width={72}>
                <GroupItems $left={11}>
                  <LargeButton><HelpIcon />Help</LargeButton>
                </GroupItems>
                <GroupName>Help</GroupName>
              </Group>
            </RibbonBody>
            <Outline $inset="-1px 1px 2px 0" />
            <Callout $x={101} $y={37} $w={63} $h={64}>2</Callout>
          </Ribbon>

          <FilesPane>
            <PaneTitle $height={24} $left={6}>
              <PaneHeading>/Files (1)</PaneHeading>
            </PaneTitle>
            <SearchForm onSubmit={(e) => e.preventDefault()}>
              <SearchField type="text" placeholder="Search" aria-label="Search" />
              <SearchButton aria-label="Run search"><SearchIcon size={20} /></SearchButton>
              <CheckLabel>
                <Check />
                Search in subfolders
              </CheckLabel>
              <PageSizeLabel htmlFor="page-size">Files per page:</PageSizeLabel>
              <SelectBox>
                <Select id="page-size" defaultValue="30">
                  <option value="30">30</option>
                </Select>
                <SelectArrow width="8" height="7" viewBox="0 0 8 7" aria-hidden="true">
                  <path d="M1 0 H7 L4 6 Z" fill="#000" />
                </SelectArrow>
              </SelectBox>
            </SearchForm>
            <Table>
              <colgroup>
                <col width="27" />
                <col width="59" />
                <col />
                <col width="104" />
                <col width="134" />
                <col width="104" />
                <col width="104" />
                <col width="5" />
              </colgroup>
              <thead>
                <tr>
                  <HeadCell scope="col">
                    <HeadInner $first><Check aria-label="Select all" /></HeadInner>
                  </HeadCell>
                  <Head />
                  <Head icon={<SortIcon />}>File name</Head>
                  <Head icon={<CaretIcon />}>Meta title</Head>
                  <Head icon={<CaretIcon />}>Modified</Head>
                  <Head>Dimensions</Head>
                  <Head icon={<CaretIcon />}>Size</Head>
                  <Head />
                </tr>
              </thead>
              <tbody>
                <tr>
                  <Cell $left={8}><Check aria-label="Select ForumExport.xml" /></Cell>
                  <Cell $left={4}><XmlFileIcon /></Cell>
                  <Cell>ForumExport.xml</Cell>
                  <Cell />
                  <Cell>Wed, 24 Feb 2016 10:47</Cell>
                  <Cell />
                  <Cell>61,079 KB</Cell>
                  <Cell />
                </tr>
              </tbody>
            </Table>
            <Info>
              <BigFolderIcon />
              <Facts>
                <FactName $column={1}>Name :</FactName>
                <FactValue $bold>Files</FactValue>
                <FactName $column={3}>Created :</FactName>
                <FactValue>Mon, 24 Nov 2014 10:54</FactValue>
                <FactName $column={5}>Resize settings:</FactName>
                <FactValue>Inactive</FactValue>
                <FactName $column={1}>Files :</FactName>
                <FactValue>1</FactValue>
                <FactName $column={3}>Edited :</FactName>
                <FactValue>Tue, 01 Mar 2016 08:05</FactValue>
              </Facts>
            </Info>
            <Outline $inset="0 5px -3px -2px" />
            <Callout $x={51} $y={296} $w={64} $h={74}>3</Callout>
          </FilesPane>
        </MainColumn>
      </Workspace>
      <StatusBar>
        <StatusEnd>
          <Svg width="10" height="10" viewBox="0 0 10 10" aria-hidden="true">
            <path d="M8 0 h2 v2 h-2z M4 4 h2 v2 h-2z M8 4 h2 v2 h-2z M0 8 h2 v2 h-2z M4 8 h2 v2 h-2z M8 8 h2 v2 h-2z" fill="#8b9098" />
          </Svg>
        </StatusEnd>
      </StatusBar>
    </Page>
  );
}
